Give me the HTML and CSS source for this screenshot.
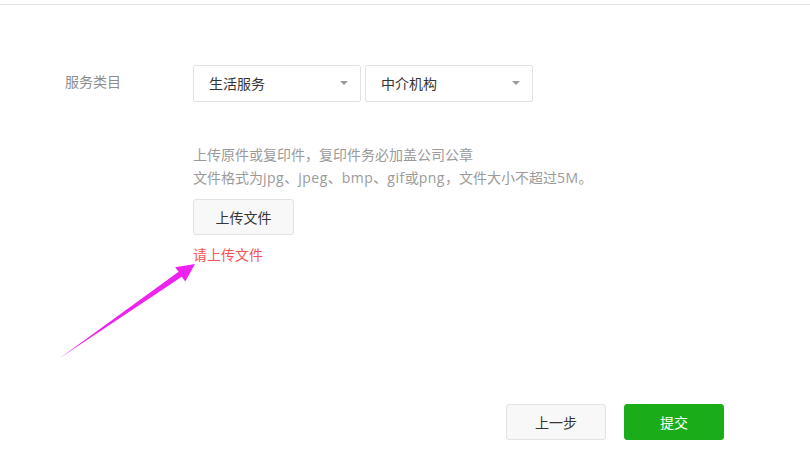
FILE: index.html
```html
<!DOCTYPE html>
<html lang="zh-CN">
<head>
<meta charset="utf-8">
<title>服务类目</title>
<link rel="stylesheet" href="styles.css">
</head>
<body>
<div class="topbar"></div>
<main class="form">
  <div class="row">
    <div class="label">服务类目</div>
    <div class="selects">
      <div class="select"><span>生活服务</span><i class="caret"></i></div>
      <div class="select"><span>中介机构</span><i class="caret"></i></div>
    </div>
  </div>
  <div class="upload">
    <p class="hint">上传原件或复印件，复印件务必加盖公司公章</p>
    <p class="hint">文件格式为<span class="latin">jpg</span>、<span class="latin">jpeg</span>、<span class="latin">bmp</span>、<span class="latin">gif</span>或<span class="latin">png</span>，文件大小不超过<span class="latin">5M</span>。</p>
    <button class="btn btn-default upload-btn">上传文件</button>
    <p class="error">请上传文件</p>
  </div>
  <div class="footer">
    <button class="btn btn-default">上一步</button>
    <button class="btn btn-primary">提交</button>
  </div>
</main>
<svg class="arrow" width="810" height="461" viewBox="0 0 810 461">
  <polygon points="60,358 178.6,271.8 175.2,267.2 195,264 185.2,281.4 181.8,276.8" fill="#ee22ee"/>
</svg>
</body>
</html>
```
FILE: styles.css
```css
* { box-sizing: border-box; }
html, body { margin: 0; padding: 0; background: #fff; }
body {
  font-family: "Open Sans", "Noto Sans CJK SC", sans-serif;
  font-size: 14px;
  color: #353535;
  position: relative;
  width: 810px;
  height: 461px;
  overflow: hidden;
}
.topbar {
  height: 5px;
  border-bottom: 1px solid #e2e4e8;
}
.form {
  padding-top: 60px;
}
.row {
  display: flex;
  align-items: center;
  padding-left: 65px;
}
.label {
  width: 128px;
  color: #8d8d8d;
  line-height: 20px;
  margin-top: -3px;
}
.selects {
  display: flex;
  gap: 4px;
}
.select {
  width: 168px;
  height: 37px;
  border: 1px solid #e2e2e2;
  border-radius: 2px;
  display: flex;
  align-items: center;
  justify-content: space-between;
  padding: 0 12px 0 15px;
  color: #353535;
}
.select span { margin-top: -2px; }
.caret {
  width: 0;
  height: 0;
  border-left: 4px solid transparent;
  border-right: 4px solid transparent;
  border-top: 4px solid #9a9a9a;
  margin-top: -1px;
}
.upload {
  margin-left: 193px;
  margin-top: 41px;
}
.hint {
  margin: 0;
  line-height: 23px;
  color: #9a9a9a;
}
.latin {
  letter-spacing: 0.5px;
}
.btn {
  font-family: inherit;
  font-size: 14px;
  height: 36px;
  width: 101px;
  border-radius: 3px;
  cursor: pointer;
  padding: 0;
}
.btn-default {
  background: #f8f8f8;
  border: 1px solid #e2e2e2;
  color: #353535;
}
.btn-primary {
  background: #1aad19;
  border: 1px solid #1aad19;
  color: #fff;
}
.upload-btn {
  margin-top: 10px;
  display: block;
}
.error {
  margin: 10px 0 0;
  line-height: 20px;
  color: #f95353;
}
.footer {
  display: flex;
  justify-content: flex-end;
  gap: 18px;
  padding-right: 86px;
  margin-top: 139px;
}
.footer .btn { width: 100px; }
.arrow {
  position: absolute;
  left: 0;
  top: 0;
  pointer-events: none;
}
```
